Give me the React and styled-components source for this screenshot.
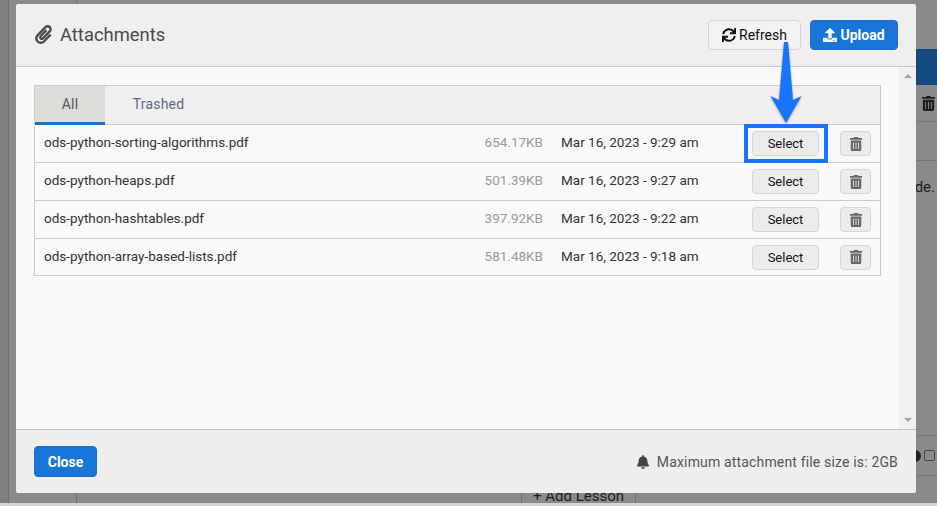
import React from 'react'
import styled, { createGlobalStyle } from 'styled-components'
import { FaPaperclip, FaSync, FaUpload, FaTrashAlt, FaBell } from 'react-icons/fa'

const files = [
  { name: 'ods-python-sorting-algorithms.pdf', size: '654.17KB', date: 'Mar 16, 2023 - 9:29 am', marked: true },
  { name: 'ods-python-heaps.pdf', size: '501.39KB', date: 'Mar 16, 2023 - 9:27 am' },
  { name: 'ods-python-hashtables.pdf', size: '397.92KB', date: 'Mar 16, 2023 - 9:22 am' },
  { name: 'ods-python-array-based-lists.pdf', size: '581.48KB', date: 'Mar 16, 2023 - 9:18 am' },
]

const GlobalStyle = createGlobalStyle`
  html, body {
    margin: 0;
    height: 100%;
    overflow: hidden;
    background: #d4d4d4;
    font-family: Roboto, "Liberation Sans", sans-serif;
  }
`

const Page = styled.div`
  position: relative;
  width: 937px;
  height: 503px;
  display: flex;
  overflow: hidden;
  background: #8a8a8a;
`

const Rail = styled.div`
  width: 8px;
  background: #7f7e82;
  border-right: 1px solid #6f6f6f;
`

const Nav = styled.div`
  width: 67px;
  border-right: 1px solid #6f6f6f;
`

const Main = styled.div`
  flex: 1;
  display: flex;
  flex-direction: column;
  color: #1d1d1d;
  font-size: 15px;
`

const BlueBar = styled.div`
  margin-top: 49px;
  height: 36px;
  flex: none;
  background: #164a7f;
`

const BackRow = styled.div`
  height: ${p => p.$height}px;
  flex: none;
  display: flex;
  align-items: center;
  justify-content: flex-end;
  gap: 3px;
  padding-right: ${p => p.$right || 0}px;
  border-bottom: 1px solid ${p => (p.$plain ? 'transparent' : '#767676')};
`

const Dot = styled.span`
  width: 12px;
  height: 12px;
  border-radius: 50%;
  background: #222;
`

const Check = styled.span`
  width: 9px;
  height: 9px;
  border: 1px solid #444;
  border-radius: 2px;
`

const AddLesson = styled.div`
  align-self: flex-start;
  margin-left: 444px;
  margin-top: 5px;
  width: 113px;
  height: 28px;
  flex: none;
  display: flex;
  align-items: center;
  justify-content: center;
  border: 1px solid #707070;
  font-size: 15px;
`

const Modal = styled.div`
  position: absolute;
  left: 16px;
  top: 4px;
  width: 900px;
  height: 489px;
  display: flex;
  flex-direction: column;
  overflow: hidden;
  border-radius: 3px;
  background: #f9f9f9;
`

const Header = styled.header`
  height: 62px;
  flex: none;
  display: flex;
  align-items: center;
  gap: 9px;
  padding: 0 18px;
  background: #efefef;
  border-bottom: 1px solid #c8c8c8;
`

const Title = styled.h2`
  flex: 1;
  margin: 0;
  padding-bottom: 2px;
  display: flex;
  align-items: center;
  gap: 7px;
  font-size: 18.4px;
  font-weight: 400;
  color: #4a4a4a;
  svg {
    font-size: 19px;
  }
`

const Button = styled.button`
  height: ${p => p.$height || 30}px;
  width: ${p => p.$width}px;
  padding: 0;
  display: inline-flex;
  align-items: center;
  justify-content: center;
  gap: 3px;
  position: relative;
  font-family: inherit;
  font-size: ${p => p.$size || 14}px;
  font-weight: ${p => (p.$primary ? 700 : 400)};
  color: ${p => (p.$primary ? '#fff' : p.$muted ? '#333' : '#111')};
  background: ${p => (p.$primary ? '#1976d8' : p.$light ? '#f3f3f3' : '#ececec')};
  border: 1px solid ${p => (p.$primary ? '#1a6fc9' : '#d5d5d5')};
  border-radius: 4px;

  ${p =>
    p.$marked &&
    `
    &::after {
      content: '';
      position: absolute;
      left: -9px;
      top: -8px;
      width: 76px;
      height: 31px;
      border: 4px solid #1a73ff;
      border-radius: 1px;
    }
  `}
`

const Body = styled.main`
  flex: 1;
  display: flex;
  min-height: 0;
`

const Content = styled.div`
  flex: 1;
  padding: 18px 18px 0;
`

const Scrollbar = styled.div`
  width: 17px;
  flex: none;
  display: flex;
  flex-direction: column;
  justify-content: space-between;
  align-items: center;
  padding: 7px 0 7px;
  box-sizing: border-box;
  background: #f1f1f1;
`

const Arrow = styled.span`
  width: 0;
  height: 0;
  border-left: 4px solid transparent;
  border-right: 4px solid transparent;
  ${p => (p.$down ? 'border-top: 4px solid #a3a3a3;' : 'border-bottom: 4px solid #a3a3a3;')}
`

const Table = styled.div`
  border: 1px solid #c9c9d2;
`

const Tabs = styled.div`
  display: flex;
  height: 38px;
  background: #efefef;
  border-bottom: 1px solid #c9c9d2;
`

const Tab = styled.div`
  width: ${p => p.$width}px;
  display: flex;
  align-items: center;
  justify-content: center;
  padding-bottom: 1px;
  font-size: 14px;
  letter-spacing: 0.2px;
  color: ${p => (p.$active ? '#555' : '#5c6b80')};
  background: ${p => (p.$active ? '#dcdcd8' : 'transparent')};
  border-bottom: 3px solid ${p => (p.$active ? '#1a6fc9' : 'transparent')};
  margin-bottom: -1px;
`

const Row = styled.div`
  height: 37px;
  display: grid;
  grid-template-columns: 409px 90px 209px 67px 52px;
  align-items: center;
  padding-left: 9px;
  font-size: 13.5px;
  color: #333;
  border-bottom: 1px solid #c9c9d2;
  &:last-child {
    height: 36px;
    border-bottom: 0;
  }
`

const Name = styled.span`
  padding-bottom: 3px;
`

const Size = styled.span`
  justify-self: end;
  padding-bottom: 3px;
  color: #9a9a9a;
`

const DateCell = styled.span`
  padding: 0 0 3px 18px;
`

const SelectCell = styled.div`
  display: flex;
`

const TrashCell = styled.div`
  margin-left: 21px;
  display: flex;
  color: #666;
`

const Footer = styled.footer`
  height: 63px;
  flex: none;
  display: flex;
  align-items: center;
  justify-content: space-between;
  padding: 0 18px;
  background: #eeeeee;
  border-top: 1px solid #c0c0c0;
`

const Note = styled.div`
  display: flex;
  align-items: center;
  gap: 7px;
  font-size: 14px;
  letter-spacing: 0.16px;
  color: #555;
  svg {
    color: #444;
    font-size: 14px;
  }
`

const Pointer = styled.svg`
  position: absolute;
  left: 766px;
  top: 38px;
  filter: drop-shadow(0 1px 1px rgba(0, 0, 0, 0.35));
`

export default function App() {
  return (
    <Page>
      <GlobalStyle />
      <Rail />
      <Nav />
      <Main>
        <BlueBar />
        <BackRow $height={36} $right={1}>
          <FaTrashAlt size={15} />
        </BackRow>
        <BackRow $height={38} />
        <BackRow $height={52} $right={2} $plain>de.</BackRow>
        <BackRow $height={221} />
        <BackRow $height={39} $right={2}>
          <Dot />
          <Check />
        </BackRow>
        <AddLesson>+ Add Lesson</AddLesson>
      </Main>

      <Modal>
        <Header>
          <Title>
            <FaPaperclip />
            Attachments
          </Title>
          <Button $width={93} $light>
            <FaSync size={14} />
            Refresh
          </Button>
          <Button $width={88} $primary>
            <FaUpload size={14} />
            Upload
          </Button>
        </Header>
        <Body>
          <Content>
            <Table>
              <Tabs>
                <Tab $active $width={70}>All</Tab>
                <Tab $width={107}>Trashed</Tab>
              </Tabs>
              {files.map(file => (
                <Row key={file.name}>
                  <Name>{file.name}</Name>
                  <Size>{file.size}</Size>
                  <DateCell>{file.date}</DateCell>
                  <SelectCell>
                    <Button $width={67} $height={25} $size={13} $marked={file.marked}>
                      Select
                    </Button>
                  </SelectCell>
                  <TrashCell>
                    <Button $width={31} $height={25} $muted>
                      <FaTrashAlt size={14} color="#666" />
                    </Button>
                  </TrashCell>
                </Row>
              ))}
            </Table>
          </Content>
          <Scrollbar>
            <Arrow />
            <Arrow $down />
          </Scrollbar>
        </Body>
        <Footer>
          <Button $width={63} $height={31} $primary>Close</Button>
          <Note>
            <FaBell />
            Maximum attachment file size is: 2GB
          </Note>
        </Footer>
      </Modal>

      <Pointer width="40" height="88" viewBox="0 0 40 88">
        <path d="M18 4 L22 4 L27 62 L35.5 58 L20 85 L4.5 58 L13 62 Z" fill="#1a73ff" />
      </Pointer>
    </Page>
  )
}
